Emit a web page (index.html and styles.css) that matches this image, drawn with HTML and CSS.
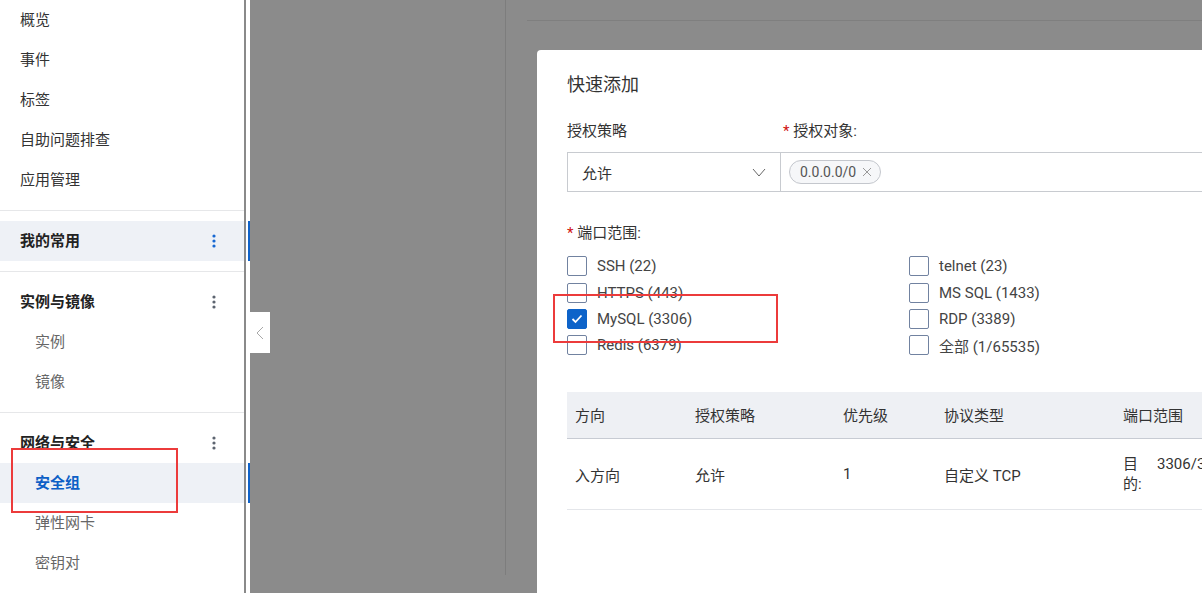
FILE: index.html
```html
<!DOCTYPE html>
<html lang="zh-CN">
<head>
    <meta charset="UTF-8">
    <title>安全组 - 快速添加</title>
    <link rel="stylesheet" href="styles.css">
</head>
<body>
    <div class="app">
        <aside class="sidebar">
            <nav class="menu">
                <div class="nav-group">
                    <div class="nav-item">概览</div>
                    <div class="nav-item">事件</div>
                    <div class="nav-item">标签</div>
                    <div class="nav-item">自助问题排查</div>
                    <div class="nav-item">应用管理</div>
                </div>
                <div class="nav-group">
                    <div class="nav-head active">
                        <span>我的常用</span>
                        <svg class="dots blue" width="4" height="14" viewBox="0 0 4 14"><circle cx="2" cy="2" r="1.6"/><circle cx="2" cy="7" r="1.6"/><circle cx="2" cy="12" r="1.6"/></svg>
                    </div>
                </div>
                <div class="nav-group">
                    <div class="nav-head">
                        <span>实例与镜像</span>
                        <svg class="dots" width="4" height="14" viewBox="0 0 4 14"><circle cx="2" cy="2" r="1.6"/><circle cx="2" cy="7" r="1.6"/><circle cx="2" cy="12" r="1.6"/></svg>
                    </div>
                    <div class="nav-sub">实例</div>
                    <div class="nav-sub">镜像</div>
                </div>
                <div class="nav-group">
                    <div class="nav-head">
                        <span>网络与安全</span>
                        <svg class="dots" width="4" height="14" viewBox="0 0 4 14"><circle cx="2" cy="2" r="1.6"/><circle cx="2" cy="7" r="1.6"/><circle cx="2" cy="12" r="1.6"/></svg>
                    </div>
                    <div class="nav-sub active">安全组</div>
                    <div class="nav-sub">弹性网卡</div>
                    <div class="nav-sub">密钥对</div>
                </div>
            </nav>
            <div class="scroll-track"></div>
            <div class="rail"></div>
        </aside>

        <main class="stage">
            <div class="bg-page"><div class="bg-head"></div></div>

            <button class="collapse">
                <svg width="8" height="14" viewBox="0 0 8 14"><path d="M7 1 L1 7 L7 13" fill="none" stroke="#a8a8a8" stroke-width="1"/></svg>
            </button>

            <section class="dialog">
                <h2 class="dialog-title">快速添加</h2>

                <div class="form-row">
                    <div class="field-label">授权策略</div>
                    <div class="field-label second"><span class="req">*</span> 授权对象:</div>
                    <div class="select">
                        <span>允许</span>
                        <svg width="14" height="9" viewBox="0 0 14 9"><path d="M1 1 L7 8 L13 1" fill="none" stroke="#666" stroke-width="1"/></svg>
                    </div>
                    <div class="tag-input">
                        <span class="tag">0.0.0.0/0
                            <svg width="10" height="10" viewBox="0 0 10 10"><path d="M1 1 L9 9 M9 1 L1 9" stroke="#9a9a9a" stroke-width="1"/></svg>
                        </span>
                    </div>
                </div>

                <div class="field-label port-label"><span class="req">*</span> 端口范围:</div>
                <div class="port-grid">
                    <label class="check"><span class="box"></span>SSH (22)</label>
                    <label class="check"><span class="box"></span>telnet (23)</label>
                    <label class="check"><span class="box"></span>HTTPS (443)</label>
                    <label class="check"><span class="box"></span>MS SQL (1433)</label>
                    <label class="check"><span class="box checked"><svg width="12" height="10" viewBox="0 0 12 10"><path d="M1.5 5 L4.5 8 L10.5 1.5" fill="none" stroke="#fff" stroke-width="1.8"/></svg></span>MySQL (3306)</label>
                    <label class="check"><span class="box"></span>RDP (3389)</label>
                    <label class="check"><span class="box"></span>Redis (6379)</label>
                    <label class="check"><span class="box"></span>全部 (1/65535)</label>
                </div>

                <div class="table-clip">
                    <table class="rules">
                        <colgroup>
                            <col style="width:120px">
                            <col style="width:148px">
                            <col style="width:101px">
                            <col style="width:179px">
                            <col style="width:240px">
                        </colgroup>
                        <thead>
                            <tr><th>方向</th><th>授权策略</th><th>优先级</th><th>协议类型</th><th>端口范围</th></tr>
                        </thead>
                        <tbody>
                            <tr>
                                <td>入方向</td>
                                <td>允许</td>
                                <td>1</td>
                                <td>自定义 TCP</td>
                                <td><div class="port-cell"><span class="port-key">目的:</span><span class="port-val">3306/3306</span></div></td>
                            </tr>
                        </tbody>
                    </table>
                </div>
            </section>
        </main>

        <div class="mark mark-nav"></div>
        <div class="mark mark-port"></div>
    </div>
</body>
</html>
```

FILE: styles.css
```css
* {
    box-sizing: border-box;
}

body {
    margin: 0;
    font-family: Roboto, "Noto Sans CJK SC", sans-serif;
    font-size: 15px;
    color: #333;
    background: #fff;
}

.app {
    position: relative;
    display: flex;
    height: 593px;
    overflow: hidden;
}

/* sidebar */
.sidebar {
    display: flex;
    width: 250px;
    flex-shrink: 0;
    background: #fff;
}

.menu {
    width: 244px;
}

.scroll-track {
    width: 2px;
    background: #8a8a8a;
}

.rail {
    width: 4px;
}

.nav-group {
    padding: 10px 0;
    border-top: 1px solid #e6e7e9;
}

.nav-group:first-child {
    padding-top: 0;
    border-top: none;
}

.nav-item,
.nav-head,
.nav-sub {
    position: relative;
    height: 40px;
    line-height: 40px;
    padding-left: 20px;
}

.nav-head {
    display: flex;
    align-items: center;
    justify-content: space-between;
    padding-right: 28px;
    font-weight: 700;
    color: #222;
}

.nav-sub {
    padding-left: 35px;
    color: #666;
}

.nav-head.active,
.nav-sub.active {
    background: #eef1f6;
}

.nav-sub.active {
    color: #0d5fc6;
    font-weight: 700;
}

.nav-head.active::after,
.nav-sub.active::after {
    content: "";
    position: absolute;
    top: 0;
    right: -6px;
    width: 2px;
    height: 40px;
    background: #0f62c9;
}

.dots {
    fill: #5d6470;
}

.dots.blue {
    fill: #1768d2;
}

/* masked page */
.stage {
    position: relative;
    flex: 1;
    background: #8b8b8b;
}

.bg-page {
    margin-left: 255px;
    height: 575px;
    border-left: 1px solid #7d7d7d;
}

.bg-head {
    margin-left: 21px;
    height: 21px;
    border-bottom: 1px solid #7f7f7f;
}

.collapse {
    position: absolute;
    left: 0;
    top: 312px;
    width: 20px;
    height: 41px;
    padding: 0;
    border: none;
    background: #fff;
    display: flex;
    align-items: center;
    justify-content: center;
}

/* dialog */
.dialog {
    position: absolute;
    left: 287px;
    top: 50px;
    right: 0;
    bottom: 0;
    padding: 23px 0 0 30px;
    background: #fff;
    border-top-left-radius: 4px;
    overflow: hidden;
}

.dialog-title {
    margin: 0 0 24px;
    font-size: 18px;
    font-weight: 400;
    line-height: 24px;
    color: #333;
}

.form-row {
    display: grid;
    grid-template-columns: 214px 640px;
    row-gap: 11px;
}

.field-label {
    line-height: 20px;
    color: #333;
}

.field-label.second {
    padding-left: 2px;
}

.req {
    color: #d01010;
}

.select {
    display: flex;
    align-items: center;
    justify-content: space-between;
    height: 40px;
    padding: 0 14px;
    border: 1px solid #c8cbd0;
}

.tag-input {
    display: flex;
    align-items: center;
    height: 40px;
    margin-left: -1px;
    padding-left: 8px;
    border: 1px solid #c8cbd0;
}

.tag {
    display: flex;
    align-items: center;
    gap: 6px;
    height: 24px;
    padding: 0 8px 0 10px;
    border: 1px solid #c4c7cd;
    border-radius: 12px;
    background: #f6f7f9;
    color: #555;
    font-size: 14px;
    line-height: 22px;
}

.port-label {
    margin-top: 31px;
}

.port-grid {
    display: grid;
    grid-template-columns: 342px 342px;
    grid-auto-rows: 26.4px;
    margin-top: 10px;
}

.check {
    display: flex;
    align-items: center;
    gap: 10px;
    color: #444;
}

.box {
    width: 20px;
    height: 20px;
    border: 1px solid #7182a0;
    border-radius: 2px;
    background: #fff;
    display: flex;
    align-items: center;
    justify-content: center;
}

.box.checked {
    background: #0d63c9;
    border-color: #0d63c9;
}

/* rule table */
.table-clip {
    width: 635px;
    margin-top: 33px;
    overflow: hidden;
}

.rules {
    width: 788px;
    border-collapse: collapse;
    table-layout: fixed;
}

.rules th,
.rules td {
    padding: 0 0 0 8px;
    text-align: left;
    font-weight: 400;
    white-space: nowrap;
}

.rules th {
    height: 47px;
    background: #eef0f4;
    border-bottom: 1px solid #c7cbd3;
}

.rules td {
    height: 71px;
    border-bottom: 1px solid #e4e6ea;
}

.port-cell {
    display: flex;
    gap: 16px;
    line-height: 20px;
}

.port-key {
    width: 18px;
    white-space: normal;
}

/* annotations */
.mark {
    position: absolute;
    border: 2px solid #ec3b3b;
}

.mark-nav {
    left: 11px;
    top: 448px;
    width: 167px;
    height: 65px;
}

.mark-port {
    left: 553px;
    top: 294px;
    width: 225px;
    height: 49px;
}
```
